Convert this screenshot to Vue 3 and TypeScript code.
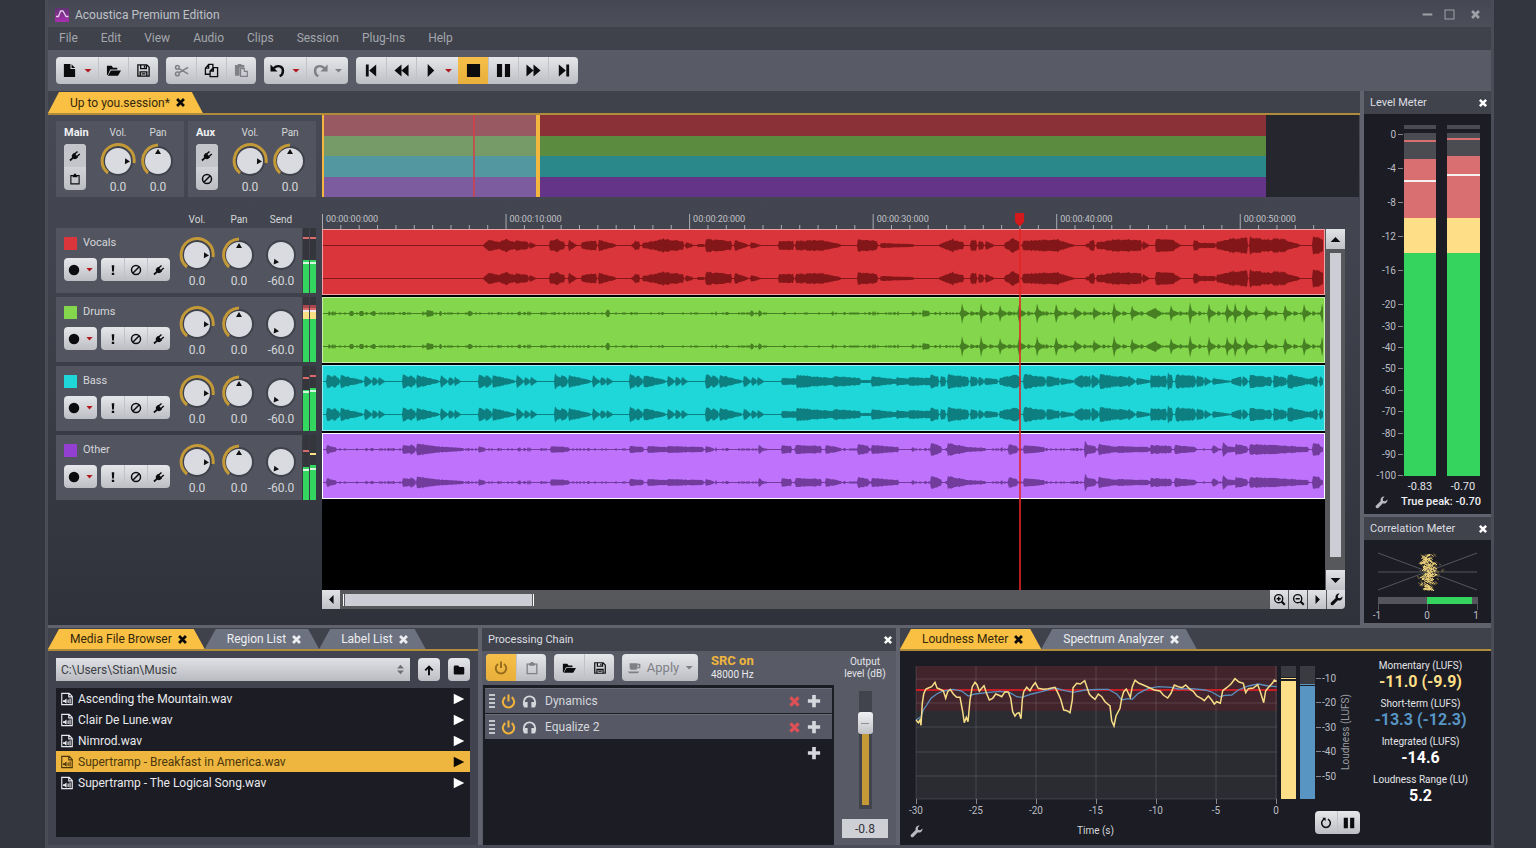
<script setup lang="ts">
import { computed, defineComponent, h, ref } from 'vue'

type Shape = { d: string; w?: number; t?: string }

const glyphs: Record<string, Shape[]> = {
  file: [{ d: 'M2 1h7v5.5h5V15H2zM10.2 1.2 14 5.2h-3.8z' }],
  open: [{ d: 'M1 3h5l1.5 2H12v2H4.5L2 12.5 1 13zM5.2 8H16l-3.2 5.5H2z' }],
  save: [{ d: 'M2 2h9.5L14 4.5V14H2zM5 2v4h6V2M9 3v2M4.5 14V9.5h7V14M6 11.5h4', w: 1.4 }],
  cut: [{ d: 'M5.2 6 15 11.5M5.2 10.4 15 4.6M3.6 6.6a2 2 0 1 0 0-4 2 2 0 0 0 0 4zM3.6 13.6a2 2 0 1 0 0-4 2 2 0 0 0 0 4z', w: 1.6 }],
  copy: [{ d: 'M6 12H1.5V5.5l3.5-4h4.5V5M1.5 5.5H5v-4M6.5 8.5 10 5h4.5v9.5h-8zM6.5 8.5H10V5', w: 1.4 }],
  paste: [{ d: 'M1 2h3V1h4v1h3v3H6v8.500H1z' }, { d: 'M7 6h4v3h3.200v5.300H7z', w: 1.3 }],
  undo: [{ d: 'M4 5.500C8 1.500 14 3.500 13.800 8.500c0 3-1.800 4.800-3.500 5.500', w: 2.6 }, { d: 'M.5 1.500v7.500H8z' }],
  redo: [{ d: 'M12 5.500C8 1.500 2 3.500 2.200 8.500c0 3 1.800 4.800 3.500 5.500', w: 2.6 }, { d: 'M15.500 1.500v7.500H8z' }],
  first: [{ d: 'M2 1.500h3v13H2zM13 1.500v13L5.500 8z' }],
  rewind: [{ d: 'M8 1.500v13L.5 8zM15.500 1.500v13L8 8z' }],
  play: [{ d: 'M5 1v14L12 8z' }],
  stop: [{ d: 'M1 1h14v14H1z' }],
  pause: [{ d: 'M1 1h5.500v14H1zM9.500 1H15v14H9.500z' }],
  forward: [{ d: 'M8 1.500v13L15.500 8zM.5 1.500v13L8 8z' }],
  last: [{ d: 'M11 1.500h3v13h-3zM3 1.500v13L10.500 8z' }],
  plug: [{ d: 'M4 6h8v2.500a4 4 0 0 1-2.800 3.800V17H6.800v-4.700A4 4 0 0 1 4 8.500zM4.800 1.500h1.900V6H4.800zM9.300 1.500h1.900V6H9.300z', t: 'rotate(48 8 8)' }],
  clip: [{ d: 'M2.500 3.500h11v11h-11z', w: 1.5 }, { d: 'M5 2.500h1.500V1h3v1.500H11v3H5z' }],
  ban: [{ d: 'M8 14a6 6 0 1 0 0-12 6 6 0 0 0 0 12zM4 12 12 4', w: 2 }],
  alert: [{ d: 'M6.300 1.500h3.400L9.200 10H6.800zM6.400 11.500h3.200v3H6.400z' }],
  dot: [{ d: 'M8 15A7 7 0 1 0 8 1a7 7 0 0 0 0 14z' }],
  wrench: [{ d: 'M15.300 4.200a4.300 4.300 0 0 1-5.600 4.800l-5.400 5.500a2 2 0 0 1-2.900-2.900L7 6.300A4.300 4.300 0 0 1 11.800.7L9.500 3.300l.5 2.700 2.700.5z' }],
  zoomin: [{ d: 'M7 12A5 5 0 1 0 7 2a5 5 0 0 0 0 10zM4.500 7h5M7 4.500v5', w: 1.7 }, { d: 'm10.500 10.500 4 4', w: 2.600 }],
  zoomout: [{ d: 'M7 12A5 5 0 1 0 7 2a5 5 0 0 0 0 10zM4.500 7h5', w: 1.7 }, { d: 'm10.500 10.500 4 4', w: 2.600 }],
  left: [{ d: 'M10.500 2.500v11L5 8z' }],
  right: [{ d: 'M5.500 2.500v11L11 8z' }],
  up: [{ d: 'M2 11h12L8 5z' }],
  down: [{ d: 'M2 5h12l-6 6z' }],
  arrowup: [{ d: 'M8 15V4M3 8.500l5-5 5 5', w: 2.600 }],
  folder: [{ d: 'M1 3.500 2 2h5l1.500 2H14l1 1v8l-1 1H2l-1-1z' }],
  sound: [{ d: 'M2 1.500h8.500l3.500 3.500v9.500H2zM10 1.500V5.500h4M9.300 8.500v4M11.500 7.500v5.500', w: 1.300 }, { d: 'M3.500 9.500H5l2.500-2v6L5 11.500H3.500z' }],
  power: [{ d: 'M4.600 3.400a6 6 0 1 0 6.800 0M8 .5v7.500', w: 2.200 }],
  phones: [{ d: 'M2 12V8.500a6 6 0 0 1 12 0V12', w: 2 }, { d: 'M2.500 8.500H6v6H3.500a2 2 0 0 1-2-2zM10 8.500h3.500l1 4a2 2 0 0 1-2 2H10z' }],
  cross: [{ d: 'M3 3l10 10M13 3 3 13', w: 4 }],
  plus: [{ d: 'M8 1v14M1 8h14', w: 4.200 }],
  cup: [{ d: 'M3 2.500h9V7a3 3 0 0 1-3 3H6a3 3 0 0 1-3-3zM1 12h13l-1.500 2H2.500z' }, { d: 'M12 4h2.500v3.500H12', w: 1.500 }],
  cycle: [{ d: 'M10.500 2.800a5.800 5.800 0 1 1-5 0', w: 2 }, { d: 'M3 1h4.500v4.500z' }],
  min: [{ d: 'M1 6.500h14v3H1z' }],
  max: [{ d: 'M1.500 1.500h13v13h-13z', w: 1.500 }],
  playbig: [{ d: 'M1 1v14l14-7z' }],
  sort: [{ d: 'M3 6.500h10L8 1zM3 9.500h10L8 15z' }],
}

const Icon = defineComponent({
  props: { name: { type: String, required: true } },
  setup(props) {
    return () =>
      h(
        'svg',
        { viewBox: '0 0 16 16', 'aria-hidden': 'true' },
        glyphs[props.name].map((s) =>
          h('path', {
            d: s.d,
            transform: s.t,
            fill: s.w ? 'none' : 'currentColor',
            stroke: s.w ? 'currentColor' : 'none',
            'stroke-width': s.w,
          }),
        ),
      )
  },
})

const KNOB_ARC: Record<string, string> = {
  vol: 'M9 32A16 16 0 1 1 35 22',
  pan: 'M9 32A16 16 0 0 1 19 4',
  send: '',
}
const Knob = defineComponent({
  props: { kind: { type: String, required: true } },
  setup(props) {
    return () => {
      const angle = props.kind === 'vol' ? 92 : props.kind === 'pan' ? 0 : 218
      return h('svg', { viewBox: '0 0 38 38', width: 38, height: 38, role: 'img', 'aria-label': props.kind }, [
        h('circle', { cx: 19, cy: 20, r: 15, fill: '#3f424b' }),
        h('path', { d: KNOB_ARC[props.kind], fill: 'none', stroke: '#c49a38', 'stroke-width': 3 }),
        h('circle', { cx: 19, cy: 20, r: 13, fill: '#d9dbe0' }),
        h('path', { d: 'M19 8l3 5h-6z', fill: '#111', transform: `rotate(${angle} 19 20)` }),
      ])
    }
  },
})

const menus = ['File', 'Edit', 'View', 'Audio', 'Clips', 'Session', 'Plug-Ins', 'Help']

type Tool = { icon: string; label: string; arrow?: boolean; dim?: boolean; on?: boolean }
const toolGroups: Tool[][] = [
  [{ icon: 'file', label: 'New', arrow: true }, { icon: 'open', label: 'Open' }, { icon: 'save', label: 'Save' }],
  [{ icon: 'cut', label: 'Cut', dim: true }, { icon: 'copy', label: 'Copy' }, { icon: 'paste', label: 'Paste', dim: true }],
  [{ icon: 'undo', label: 'Undo', arrow: true }, { icon: 'redo', label: 'Redo', arrow: true, dim: true }],
  [
    { icon: 'first', label: 'Go to start' },
    { icon: 'rewind', label: 'Rewind' },
    { icon: 'play', label: 'Play', arrow: true },
    { icon: 'stop', label: 'Stop', on: true },
    { icon: 'pause', label: 'Pause' },
    { icon: 'forward', label: 'Forward' },
    { icon: 'last', label: 'Go to end' },
  ],
]

type Band = [y: number, height: number, color: string]
type Burst = [from: number, to: number, a: number, b: number]
interface Track {
  name: string
  key: string
  meter: [Band[], Band[]]
  bursts: Burst[]
  floor: number
}

const green = '#33d65f'
const vocalMeter: Band[] = [[9, 2, '#d96a6c'], [32, 33, green], [34, 2, '#d8f5e0']]
const drumMeter: Band[] = [[8, 3, '#a8484c'], [11, 4, '#d96a6c'], [13, 2, '#f4e9e9'], [15, 7, '#fbdf84'], [22, 43, green]]

const bassPhrase: Burst[] = [[4, 10, 7, 4], [11, 16, 6, 3], [18, 39, 6, 1], [42, 48, 6, 1], [50, 54, 4, 2], [56, 62, 4, 0]]
const bassIntro: Burst[] = [0, 76, 152, 228, 303, 379].flatMap((o) =>
  bassPhrase.map(([a, b, x, y]): Burst => [a + o, b + o, x, y]),
)
const drumHits: [number, number][] = [
  [639, 10], [658, 10], [677, 9], [696, 10], [714, 9], [733, 10], [752, 6], [771, 6], [791, 10], [809, 7], [848, 8],
  [867, 11], [886, 9], [904, 9], [912, 10], [923, 8], [943, 7], [962, 8], [981, 10], [999, 9],
]

const tracks: Track[] = [
  {
    name: 'Vocals', key: 'vocals', meter: [vocalMeter, vocalMeter], floor: 0,
    bursts: [
      [161, 165, 1, 5], [165, 177, 5, 3], [178, 184, 4, 6], [184, 192, 5, 3], [193, 205, 5, 3], [207, 213, 3, 0],
      [227, 234, 4, 6], [234, 241, 6, 3], [246, 254, 5, 0], [259, 273, 3, 5], [276, 292, 5, 1], [308, 311, 0, 2], [312, 316, 4, 4],
      [320, 340, 2, 6], [340, 360, 6, 4], [363, 369, 3, 1], [375, 381, 1, 1], [383, 408, 6, 4], [412, 424, 5, 1], [428, 438, 3, 0],
      [456, 470, 4, 4], [473, 498, 4, 5], [498, 517, 5, 1], [535, 554, 6, 4], [558, 590, 2, 1], [617, 630, 1, 6], [630, 640, 5, 3],
      [648, 653, 5, 5], [656, 660, 4, 3], [663, 670, 4, 1], [682, 690, 2, 7], [690, 697, 7, 3], [700, 735, 4, 6], [735, 752, 5, 0],
      [763, 766, 1, 2], [767, 771, 5, 5], [774, 790, 3, 5], [790, 818, 6, 5], [820, 825, 4, 1], [833, 850, 6, 5], [850, 858, 5, 0],
      [871, 875, 5, 4], [876, 892, 2, 2], [894, 910, 3, 7], [910, 924, 6, 8], [927, 950, 8, 5], [950, 962, 7, 6], [962, 976, 5, 1],
      [990, 996, 8, 8], [996, 1001, 7, 4],
    ],
  },
  {
    name: 'Drums', key: 'drums', meter: [drumMeter, drumMeter], floor: 1,
    bursts: [
      [27, 30, 2, 2], [37, 40, 2, 2], [50, 52, 2, 2], [104, 110, 3, 2], [146, 148, 2, 2], [284, 286, 3, 3], [428, 430, 3, 2],
      [436, 438, 3, 2], [600, 606, 3, 2], [824, 832, 1, 5], [832, 838, 5, 1],
      ...drumHits.flatMap(([x, a]): Burst[] => [[x - 1, x, a / 3, a], [x, x + 2, a, 2], [x + 2, x + 6, 3, 1], [x + 9, x + 11, 2, 1]]),
    ],
  },
  {
    name: 'Bass', key: 'bass', floor: 0,
    meter: [
      [[11, 2, '#d96a6c'], [24, 41, green], [25, 2, '#d8f5e0']],
      [[9, 2, '#d96a6c'], [22, 43, green], [24, 2, '#d8f5e0']],
    ],
    bursts: [
      ...bassIntro,
      [459, 473, 3, 3], [474, 511, 6, 3], [511, 537, 5, 3], [537, 549, 1, 1], [549, 573, 5, 2], [574, 586, 4, 2], [586, 607, 4, 3],
      [608, 615, 6, 5], [618, 622, 5, 4], [625, 645, 7, 4], [648, 654, 5, 3], [656, 660, 5, 2], [662, 674, 3, 2], [677, 692, 3, 6],
      [693, 697, 6, 5], [701, 722, 7, 4], [724, 736, 5, 3], [738, 750, 3, 1], [752, 759, 3, 6], [759, 767, 5, 5], [769, 775, 6, 3],
      [777, 796, 7, 4], [796, 805, 5, 4], [806, 812, 5, 1], [814, 826, 3, 1], [828, 843, 6, 5], [845, 849, 8, 6], [853, 872, 7, 5],
      [874, 880, 5, 4], [882, 887, 4, 1], [890, 908, 3, 0], [909, 918, 2, 5], [920, 924, 6, 2], [927, 948, 6, 4], [951, 957, 6, 4],
      [958, 963, 5, 3], [965, 986, 7, 2], [986, 994, 2, 5], [997, 1001, 5, 1],
    ],
  },
  {
    name: 'Other', key: 'other', floor: 1,
    meter: [
      [[15, 2, '#d96a6c'], [32, 33, green], [34, 2, '#d8f5e0']],
      [[18, 2, '#fbdf84'], [30, 35, green], [33, 2, '#d8f5e0']],
    ],
    bursts: [
      [4, 13, 4, 1], [80, 88, 4, 3], [88, 92, 5, 2], [94, 112, 6, 3], [112, 140, 3, 1], [156, 162, 3, 1], [228, 245, 3, 2], [307, 320, 3, 2],
      [325, 345, 3, 2], [345, 380, 3, 2], [383, 390, 3, 1], [436, 440, 4, 1], [459, 468, 4, 3], [473, 498, 4, 3], [503, 518, 4, 1],
      [535, 545, 5, 3], [549, 575, 4, 2], [608, 618, 6, 3], [625, 645, 6, 2], [645, 660, 2, 1], [686, 694, 5, 3], [701, 720, 4, 2],
      [762, 765, 8, 4], [765, 772, 4, 3], [776, 795, 5, 2], [795, 825, 3, 2], [828, 848, 4, 3], [852, 872, 4, 2], [890, 894, 4, 2],
      [900, 903, 8, 4], [903, 912, 3, 2], [913, 924, 5, 3], [927, 950, 5, 4], [951, 985, 4, 2], [990, 996, 6, 5], [996, 1001, 4, 1],
    ],
  },
]

function wavePath(track: Track): string {
  const width = 1001
  let seed = 17 + track.name.length * 31
  const random = () => (seed = (seed * 16807) % 2147483647) / 2147483647
  const amp = new Array<number>(width).fill(0)
  if (track.floor) for (let x = 5; x < width; x++) if (random() > 0.62) amp[x] = Math.round(random() * 1.6)
  for (const [from, to, a, b] of track.bursts) {
    for (let x = from; x <= to && x < width; x++) {
      const level = a + ((b - a) * (x - from)) / Math.max(1, to - from)
      amp[x] = Math.max(amp[x], level * (0.8 + random() * 0.3))
    }
  }
  const outline = (cy: number) => {
    const top = amp.map((a, x) => `${x} ${(cy - 0.5 - a).toFixed(1)}`)
    const bottom = amp.map((a, x) => `${x} ${(cy + 0.5 + a).toFixed(1)}`).reverse()
    return `M${top.join('L')}L${bottom.join('L')}Z`
  }
  return outline(15.5) + outline(48.5)
}
const waves = tracks.map(wavePath)

const majors = [0, 1, 2, 3, 4, 5].map((i) => ({ x: `${i * 18.3}%`, text: `00:00:${i}0:000` }))
const minors = Array.from({ length: 54 }, (_, i) => i + 1).filter((i) => i % 10).map((i) => `${(i * 1.83).toFixed(2)}%`)

const levelScale: [number, string][] = [
  [20, '0'], [54, '-4'], [88, '-8'], [122, '-12'], [156, '-16'], [190, '-20'], [212, '-30'], [233, '-40'], [254, '-50'],
  [276, '-60'], [297, '-70'], [319, '-80'], [340, '-90'], [361, '-100'],
]

const scatter = computed(() => {
  let seed = 91
  const random = () => (seed = (seed * 16807) % 2147483647) / 2147483647
  const draw = (n: number, spread: number) => {
    const pts: string[] = []
    for (let i = 0; i < n; i++) {
      const y = 14 + random() * 35
      const half = (3 + 4 * Math.sin(((y - 12) / 40) * Math.PI) + 2 * Math.sin(y * 0.9)) * spread
      const drift = 2 * Math.sin(y * 0.25)
      pts.push(`${(65 + drift + (random() - 0.5) * 2 * half).toFixed(1)} ${y.toFixed(1)}`)
    }
    return pts
  }
  return {
    haze: draw(110, 1.5).map((p) => `M${p}l2 1`).join(''),
    core: draw(200, 0.95).map((p, i) => `M${p}l${i % 2 ? 2 : -2} ${i % 3 ? 2 : 1}`).join(''),
  }
})

// Loudness history, three units per chart pixel.
const momentary = '63,300 70,308 75,300 78,316 82,250 86,222 92,208 100,204 110,200 120,187 126,204 135,208 145,212 152,235 158,215 166,208 175,222 185,232 195,232 203,275 208,308 214,292 219,305 225,240 232,200 240,187 246,194 253,214 260,205 267,197 274,218 283,240 293,235 302,222 312,226 320,230 330,215 340,216 347,235 353,275 360,288 366,280 372,278 378,296 382,240 386,215 395,202 405,212 413,198 421,188 430,205 445,208 460,206 480,202 487,215 497,238 506,270 516,272 525,278 532,240 534,203 545,190 556,192 569,182 577,205 583,222 590,230 600,238 610,222 620,230 630,245 645,258 650,302 657,318 663,288 675,265 680,235 686,215 694,207 706,232 712,200 720,181 732,190 745,195 760,202 778,210 795,213 805,225 818,234 828,220 838,195 850,200 862,203 872,195 885,208 895,214 905,228 920,236 928,242 940,228 950,240 958,252 965,245 976,250 983,212 995,203 1008,192 1020,176 1032,186 1045,190 1052,218 1060,206 1075,204 1088,194 1096,215 1106,248 1112,212 1122,200 1132,190 1138,180 1145,184'
const shortTerm = '63,300 78,290 85,270 95,255 108,235 125,222 145,213 175,208 200,213 220,228 240,222 275,218 315,214 345,218 365,230 380,232 410,222 440,215 480,204 510,212 535,217 570,210 610,208 640,208 665,222 680,240 700,236 712,238 730,220 760,205 790,200 830,202 850,207 890,206 930,210 950,216 975,230 990,226 1010,225 1030,210 1060,198 1090,192 1120,198 1145,200'
const toChart = (points: string) =>
  points.split(' ').map((p) => {
    const [x, y] = p.split(',').map(Number)
    return `${(x / 3 - 5).toFixed(1)},${(y / 3 - 31).toFixed(1)}`
  }).join(' ')
const momentaryLine = toChart(momentary)
const shortTermLine = toChart(shortTerm)
const timeTicks = [-30, -25, -20, -15, -10, -5, 0].map((v, i) => ({ v, x: 16 + i * 60 }))
const lufsTicks = [-10, -20, -30, -40, -50].map((v, i) => ({ v, y: 28 + Math.round(i * 24.4) }))

const files = ['Ascending the Mountain.wav', 'Clair De Lune.wav', 'Nimrod.wav', 'Supertramp - Breakfast in America.wav', 'Supertramp - The Logical Song.wav']
const selected = ref(3)
const effects = ['Dynamics', 'Equalize 2']
const stats = [
  { label: 'Momentary (LUFS)', value: '-11.0 (-9.9)', tone: 'yellow' },
  { label: 'Short-term (LUFS)', value: '-13.3 (-12.3)', tone: 'blue' },
  { label: 'Integrated (LUFS)', value: '-14.6', tone: 'white' },
  { label: 'Loudness Range (LU)', value: '5.2', tone: 'white' },
]
const level = ref(78)
const levelText = ref('-0.8')
</script>

<template>
  <div class="desktop">
    <div class="window">
      <header class="titlebar">
        <svg class="logo" viewBox="0 0 14 14" aria-hidden="true">
          <defs>
            <linearGradient id="logo-fill" x1="0" y1="0" x2="0" y2="1">
              <stop offset="0" stop-color="#5f3272" />
              <stop offset="1" stop-color="#a82fae" />
            </linearGradient>
          </defs>
          <rect width="14" height="14" fill="url(#logo-fill)" />
          <path d="M1 8.500h2.500L5.500 3h2.500l3 5.500h2.500" fill="none" stroke="#e7cdec" stroke-width="1.300" stroke-linejoin="round" />
        </svg>
        <h1>Acoustica Premium Edition</h1>
        <div class="window-buttons">
          <button aria-label="Minimize"><Icon name="min" /></button>
          <button aria-label="Maximize"><Icon name="max" /></button>
          <button aria-label="Close"><Icon name="cross" /></button>
        </div>
      </header>

      <nav class="menubar">
        <button v-for="m in menus" :key="m">{{ m }}</button>
      </nav>

      <div class="toolbar">
        <div v-for="(g, i) in toolGroups" :key="i" class="group">
          <button v-for="t in g" :key="t.label" :aria-label="t.label" :class="{ wide: t.arrow, dim: t.dim, on: t.on }">
            <Icon :name="t.icon" />
            <i v-if="t.arrow" class="caret"></i>
          </button>
        </div>
      </div>

      <div class="workspace">
        <main class="session">
          <div class="tabs">
            <div class="tab active">
              <button>Up to you.session*</button>
              <button class="x" aria-label="Close session"><Icon name="cross" /></button>
            </div>
          </div>
          <div class="session-body">
            <div class="mixer">
              <div class="strips">
                <section v-for="s in ['Main', 'Aux']" :key="s" class="strip">
                  <div class="strip-side">
                    <h2>{{ s }}</h2>
                    <div class="group vertical">
                      <button class="shade" :aria-label="s + ' plug-ins'"><Icon name="plug" /></button>
                      <button :aria-label="s + ' option'"><Icon :name="s === 'Main' ? 'clip' : 'ban'" /></button>
                    </div>
                  </div>
                  <div class="knob"><span class="cap">Vol.</span><Knob kind="vol" /><span>0.0</span></div>
                  <div class="knob"><span class="cap">Pan</span><Knob kind="pan" /><span>0.0</span></div>
                </section>
              </div>
              <div class="knob-labels"><span>Vol.</span><span>Pan</span><span>Send</span></div>
              <div class="heads">
                <section v-for="t in tracks" :key="t.key" class="head">
                  <div class="head-info">
                    <div class="track-name"><i :class="['swatch', t.key]"></i>{{ t.name }}</div>
                    <div class="track-buttons">
                      <div class="group small">
                        <button class="rec" :aria-label="'Record ' + t.name"><Icon name="dot" /><i class="caret"></i></button>
                      </div>
                      <div class="group small">
                        <button :aria-label="'Solo ' + t.name"><Icon name="alert" /></button>
                        <button :aria-label="'Mute ' + t.name"><Icon name="ban" /></button>
                        <button :aria-label="'Plug-ins for ' + t.name"><Icon name="plug" /></button>
                      </div>
                    </div>
                  </div>
                  <div class="knob"><Knob kind="vol" /><span>0.0</span></div>
                  <div class="knob"><Knob kind="pan" /><span>0.0</span></div>
                  <div class="knob"><Knob kind="send" /><span>-60.0</span></div>
                  <svg class="track-meter" viewBox="0 0 13 65" aria-hidden="true">
                    <g v-for="(bands, i) in t.meter" :key="i">
                      <rect :x="i * 7" y="0" width="6" height="65" fill="#35363b" />
                      <rect v-for="(b, j) in bands" :key="j" :x="i * 7" :y="b[0]" width="6" :height="b[1]" :fill="b[2]" />
                    </g>
                  </svg>
                </section>
              </div>
            </div>

            <div class="timeline">
              <div class="overview">
                <div class="stripes"><i class="s1"></i><i class="s2"></i><i class="s3"></i><i class="s4"></i></div>
                <div class="view-range"></div>
                <div class="view-cursor"></div>
              </div>
              <div class="tracks">
                <svg class="ruler" width="100%" height="32" aria-label="Timeline">
                  <g v-for="m in majors" :key="m.text">
                    <svg :x="m.x" y="0" overflow="visible">
                      <path d="M0 17h1v15H0z" fill="#a9abb1" />
                      <text x="4" y="25">{{ m.text }}</text>
                    </svg>
                  </g>
                  <svg v-for="x in minors" :key="x" :x="x" y="0" overflow="visible"><path d="M0 28h1v4H0z" fill="#a9abb1" /></svg>
                  <svg x="69.500%" y="0" overflow="visible"><path d="M-4 16h9v9l-4 4h-1l-4-4z" fill="#d4191c" /></svg>
                </svg>
                <div></div>
                <div class="lanes">
                  <div v-for="(t, i) in tracks" :key="t.key" :class="['lane', t.key]">
                    <svg viewBox="0 0 1001 64" preserveAspectRatio="none" role="img" :aria-label="t.name + ' waveform'"><path :d="waves[i]" /></svg>
                  </div>
                  <div class="playhead"></div>
                </div>
                <div class="vscroll">
                  <button aria-label="Scroll up"><Icon name="up" /></button>
                  <div class="vthumb"></div>
                  <button aria-label="Scroll down"><Icon name="down" /></button>
                </div>
                <div class="hscroll">
                  <button aria-label="Scroll left"><Icon name="left" /></button>
                  <div class="hrail"><div class="hthumb"></div></div>
                  <button aria-label="Zoom in"><Icon name="zoomin" /></button>
                  <button aria-label="Zoom out"><Icon name="zoomout" /></button>
                  <button aria-label="Scroll right"><Icon name="right" /></button>
                  <button aria-label="Timeline settings"><Icon name="wrench" /></button>
                </div>
              </div>
            </div>
          </div>
        </main>

        <aside class="meters">
          <section class="level">
            <header class="panel-head"><h2>Level Meter</h2><button class="x" aria-label="Close level meter"><Icon name="cross" /></button></header>
            <svg viewBox="0 0 127 380" role="img" aria-label="Level meter">
              <g v-for="[y, t] in levelScale" :key="t">
                <text x="32" :y="y + 4" text-anchor="end">{{ t }}</text>
                <path :d="`M34 ${y}h5v1h-5z`" fill="#85868c" />
              </g>
              <path d="M40 11h32v4H40zM40 19h32v26H40zM83 11h33v4H83zM83 19h33v23H83z" fill="#4b4c51" />
              <path d="M40 45h32v59H40zM83 42h33v62H83zM40 26h32v2H40zM83 24h33v2H83z" fill="#d96f70" />
              <path d="M40 104h32v35H40zM83 104h33v35H83z" fill="#fedf87" />
              <path d="M40 139h32v223H40zM83 139h33v223H83z" fill="#34d45f" />
              <path d="M40 66h32v2H40zM83 60h33v2H83z" fill="#f6f0f0" />
              <g class="peak">
                <text x="56" y="376" text-anchor="middle">-0.83</text>
                <text x="99" y="376" text-anchor="middle">-0.70</text>
              </g>
            </svg>
            <footer><button class="bare" aria-label="Level meter settings"><Icon name="wrench" /></button><span>True peak: -0.70</span></footer>
          </section>
          <section class="correlation">
            <header class="panel-head"><h2>Correlation Meter</h2><button class="x" aria-label="Close correlation meter"><Icon name="cross" /></button></header>
            <svg viewBox="0 0 127 83" role="img" aria-label="Correlation meter">
              <path d="M14 13l99 37M14 50l99-37M14 32h99" stroke="#55565d" fill="none" />
              <path :d="scatter.haze" stroke="#6f633f" fill="none" />
              <path :d="scatter.core" stroke="#f3d77e" fill="none" />
              <path d="M14 57h100v7H15v6h-1zM113 64h1v6h-1zM63 64h1v6h-1z" fill="#55565d" />
              <path d="M63 57h45v7H63z" fill="#34d45f" />
              <g text-anchor="middle">
                <text x="13" y="79">-1</text>
                <text x="63" y="79">0</text>
                <text x="112" y="79">1</text>
              </g>
            </svg>
          </section>
        </aside>
      </div>

      <div class="dock">
        <section class="media">
          <div class="tabs">
            <div class="tab active"><button>Media File Browser</button><button class="x" aria-label="Close media file browser"><Icon name="cross" /></button></div>
            <div class="tab"><button>Region List</button><button class="x" aria-label="Close region list"><Icon name="cross" /></button></div>
            <div class="tab"><button>Label List</button><button class="x" aria-label="Close label list"><Icon name="cross" /></button></div>
          </div>
          <div class="media-body">
            <div class="path-row">
              <div class="select">
                <select aria-label="Folder"><option>C:\Users\Stian\Music</option></select>
                <Icon name="sort" />
              </div>
              <button class="key" aria-label="Up one folder"><Icon name="arrowup" /></button>
              <button class="key" aria-label="Browse"><Icon name="folder" /></button>
            </div>
            <ul class="files">
              <li v-for="(f, i) in files" :key="f" :class="{ selected: i === selected }" @click="selected = i">
                <Icon name="sound" /><span>{{ f }}</span>
                <button :aria-label="'Play ' + f"><Icon name="playbig" /></button>
              </li>
            </ul>
          </div>
        </section>

        <section class="chain">
          <header class="panel-head"><h2>Processing Chain</h2><button class="x" aria-label="Close processing chain"><Icon name="cross" /></button></header>
          <div class="chain-body">
            <div class="chain-main">
              <div class="chain-tools">
                <div class="group">
                  <button class="on amber" aria-label="Enable chain"><Icon name="power" /></button>
                  <button class="dim" aria-label="Paste chain"><Icon name="clip" /></button>
                </div>
                <div class="group">
                  <button aria-label="Open chain"><Icon name="open" /></button>
                  <button aria-label="Save chain"><Icon name="save" /></button>
                </div>
                <div class="group"><button class="apply dim"><Icon name="cup" />Apply<i class="caret"></i></button></div>
                <div class="src"><b>SRC on</b><span>48000 Hz</span></div>
              </div>
              <div class="effects">
                <div v-for="e in effects" :key="e" class="effect">
                  <i class="grip"></i>
                  <button class="pow" :aria-label="'Enable ' + e"><Icon name="power" /></button>
                  <button class="phones" :aria-label="'Monitor ' + e"><Icon name="phones" /></button>
                  <span>{{ e }}</span>
                  <button class="del" :aria-label="'Remove ' + e"><Icon name="cross" /></button>
                  <button :aria-label="'Add after ' + e"><Icon name="plus" /></button>
                </div>
                <div class="effect empty"><span></span><button aria-label="Add effect"><Icon name="plus" /></button></div>
              </div>
            </div>
            <div class="output">
              <label for="out-level">Output<br />level (dB)</label>
              <input id="out-level" v-model="level" type="range" min="0" max="100" />
              <input v-model="levelText" class="out-value" type="text" aria-label="Output level value" />
            </div>
          </div>
        </section>

        <section class="loudness">
          <div class="tabs">
            <div class="tab active"><button>Loudness Meter</button><button class="x" aria-label="Close loudness meter"><Icon name="cross" /></button></div>
            <div class="tab"><button>Spectrum Analyzer</button><button class="x" aria-label="Close spectrum analyzer"><Icon name="cross" /></button></div>
          </div>
          <div class="loud-body">
            <div class="plot">
              <svg viewBox="0 0 380 166" role="img" aria-label="Loudness history">
                <path d="M16 15h361v45H16z" fill="#42252c" />
                <path d="M16 60h361v88H16z" fill="#2b2c32" />
                <path d="M16 28h361M16 52h361M16 76h361M16 101h361M16 125h361M76 15v133M136 15v133M196 15v133M256 15v133M316 15v133M376 15v133M16 15v133M16 148h361" stroke="#fff" stroke-opacity=".13" fill="none" />
                <path d="M16 38h361v2H16z" fill="#c81d27" />
                <polyline :points="shortTermLine" fill="none" stroke="#5b8fbf" stroke-width="1.300" />
                <polyline :points="momentaryLine" fill="none" stroke="#f6dc86" stroke-width="1.500" />
                <g v-for="t in timeTicks" :key="t.v">
                  <path :d="`M${t.x} 148h1v5h-1z`" fill="#85868c" />
                  <text :x="t.x" y="163" text-anchor="middle">{{ t.v }}</text>
                </g>
              </svg>
              <footer><button class="bare" aria-label="Loudness settings"><Icon name="wrench" /></button><span>Time (s)</span></footer>
            </div>
            <div class="bars">
              <svg viewBox="0 0 80 154" role="img" aria-label="Current loudness">
                <path d="M1 15h15v11H1zM20 15h15v18H20z" fill="#3a3b41" />
                <path d="M1 27h15v1H1zM1 30h15v118H1z" fill="#fedf87" />
                <path d="M20 33h15v1H20zM20 35h15v113H20z" fill="#5895c3" />
                <g v-for="t in lufsTicks" :key="t.v">
                  <path :d="`M36 ${t.y - 1}h5v1h-5z`" fill="#85868c" />
                  <text x="42" :y="t.y + 3">{{ t.v }}</text>
                </g>
                <text class="axis" transform="translate(69 81) rotate(-90)" text-anchor="middle">Loudness (LUFS)</text>
              </svg>
              <div class="group small pair">
                <button aria-label="Reset"><Icon name="cycle" /></button>
                <button aria-label="Pause metering"><Icon name="pause" /></button>
              </div>
            </div>
            <dl class="stats">
              <div v-for="s in stats" :key="s.label"><dt>{{ s.label }}</dt><dd :class="s.tone">{{ s.value }}</dd></div>
            </dl>
          </div>
        </section>
      </div>
    </div>
  </div>
</template>

<style>
body {
  margin: 0;
  background: #34363f;
}
</style>

<style scoped>
.desktop {
  min-height: 100vh;
  padding: 0 42px 0 45px;
  display: flex;
  box-sizing: border-box;
  font-family: Roboto, "Liberation Sans", sans-serif;
  font-size: 12px;
  line-height: 16px;
  color: #d5d7db;
}
.desktop *,
.desktop *::before {
  box-sizing: border-box;
}
h1,
h2,
dl,
dd,
ul {
  margin: 0;
  padding: 0;
  font-weight: 400;
}
h2 {
  font-size: 11px;
}
svg {
  display: block;
}
button {
  font: inherit;
  color: inherit;
  background: none;
  border: 0;
  padding: 0;
  margin: 0;
}
.window {
  flex: 1;
  min-width: 0;
  display: flex;
  flex-direction: column;
  border: 3px solid #4a4d58;
  border-top-width: 0;
  background: #60636e;
}
.titlebar {
  height: 27px;
  display: flex;
  align-items: center;
  gap: 6px;
  padding: 2px 10px 0 7px;
  background: linear-gradient(#454853, #4c4f5a);
}
.titlebar h1 {
  flex: 1;
  font-size: 12px;
  color: #bfc1c7;
}
.logo {
  width: 14px;
  height: 14px;
}
.window-buttons {
  display: flex;
  align-items: center;
  gap: 11px;
  color: #9da0a7;
}
.window-buttons svg {
  width: 11px;
  height: 11px;
}
.window-buttons button:last-child {
  margin-left: 4px;
}
.menubar {
  height: 23px;
  display: flex;
  align-items: center;
  gap: 23px;
  padding: 0 0 2px 11px;
  background: #3f424a;
  color: #a3a6ad;
}
.toolbar {
  height: 41px;
  display: flex;
  align-items: center;
  gap: 8px;
  padding-left: 8px;
  background: #585b66;
}
.group {
  display: flex;
  height: 27px;
  border-radius: 4px;
  overflow: hidden;
  background: linear-gradient(#e6e7ea, #bcbec4);
  color: #0c0c0e;
}
.group button {
  width: 30px;
  display: flex;
  align-items: center;
  justify-content: center;
  gap: 7px;
}
.group button + button {
  border-left: 1px solid #c0c2c7;
}
.group button.wide {
  width: 42px;
}
.group svg {
  width: 14px;
  height: 14px;
}
.toolbar .group svg {
  width: 15px;
  height: 15px;
}
.caret {
  width: 8px;
  height: 4px;
  background: #b3161c;
  clip-path: polygon(0 0, 100% 0, 50% 100%);
}
.dim {
  color: #7e8086;
}
.dim .caret {
  background: #7e8086;
}
.group button.on {
  background: linear-gradient(#f5bf49, #e8b03b);
  border-color: transparent;
}
.group .amber {
  color: #946c1c;
}
.group.vertical {
  flex-direction: column;
  width: 22px;
  height: 46px;
  margin-top: 3px;
}
.group.vertical button {
  width: 22px;
  height: 23px;
}
.group.vertical button + button {
  border-left: 0;
}
.group.vertical .shade {
  background: #c3c5ca;
}
.group.vertical svg {
  width: 12px;
  height: 12px;
}
.group.small {
  height: 23px;
}
.group.small button {
  width: 23px;
  gap: 6px;
}
.group.small .rec {
  width: 33px;
}
.group.small svg {
  width: 12px;
  height: 12px;
}
.rec .caret {
  width: 7px;
}

.workspace {
  flex: 1 0 auto;
  display: grid;
  grid-template-columns: minmax(0, 1fr) 127px;
  gap: 4px;
}
.session {
  display: flex;
  flex-direction: column;
}
.tabs {
  display: flex;
  height: 23px;
  padding-top: 1px;
  background: #3f424b;
  border-bottom: 2px solid #b08c3a;
}
.session > .tabs {
  height: 24px;
}
.tab {
  display: flex;
  align-items: center;
  gap: 5px;
  padding: 0 17px 0 22px;
  background: #6d7280;
  color: #eceef1;
  clip-path: polygon(11px 0, calc(100% - 11px) 0, 100% 100%, 0 100%);
}
.tab.active {
  background: #fac044;
  color: #33270a;
}
.x svg {
  width: 11px;
  height: 11px;
}
.tab.active .x {
  color: #0b0a06;
}
.session-body {
  flex: 1;
  display: grid;
  grid-template-columns: 274px minmax(0, 1fr);
  background: linear-gradient(#474a54, #2f323b);
}
.mixer {
  padding: 6px 0 0 8px;
}
.strips {
  display: flex;
  gap: 4px;
}
.strip {
  width: 128px;
  height: 76px;
  padding: 4px 0 0 8px;
  display: flex;
  background: #525560;
}
.strip-side {
  width: 34px;
}
.strip h2 {
  line-height: 16px;
  font-weight: 700;
  color: #f0f1f3;
}
.knob {
  width: 42px;
  display: flex;
  flex-direction: column;
  align-items: center;
}
.strip .knob {
  width: 40px;
}
.cap,
.knob-labels {
  font-size: 10px;
}
.knob-labels {
  height: 31px;
  padding: 15px 0 0 120px;
  display: flex;
}
.knob-labels span {
  width: 42px;
  text-align: center;
}
.heads {
  display: flex;
  flex-direction: column;
  gap: 4px;
}
.head {
  width: 261px;
  height: 65px;
  display: flex;
  background: linear-gradient(90deg, #525560 246px, transparent 246px);
}
.head-info {
  width: 120px;
  padding: 7px 0 0 8px;
}
.head .knob {
  padding-top: 7px;
}
.head .knob:nth-child(4) {
  margin-right: 1px;
}
.track-name {
  display: flex;
  align-items: center;
  gap: 6px;
  font-size: 11px;
}
.swatch {
  width: 13px;
  height: 13px;
}
.track-buttons {
  display: flex;
  gap: 4px;
  margin-top: 7px;
}
.track-meter {
  width: 13px;
  height: 65px;
}
.swatch.vocals,
.lane.vocals {
  background: #d9353a;
}
.swatch.drums,
.lane.drums {
  background: #84d64c;
}
.swatch.bass,
.lane.bass {
  background: #1fd6d8;
}
.swatch.other {
  background: #9340d2;
}
.lane.other {
  background: #bf73fd;
  border-color: #fff;
}

.timeline {
  display: flex;
  flex-direction: column;
}
.overview {
  position: relative;
  height: 82px;
  margin-right: 1px;
  background: #25262e;
}
.stripes {
  width: 91%;
  height: 100%;
  display: grid;
  grid-template-rows: repeat(4, 1fr);
}
.s1 { background: #8a3137; }
.s2 { background: #5a8b3e; }
.s3 { background: #2a888b; }
.s4 { background: #643489; }
.view-range {
  position: absolute;
  inset: 0 auto 0 0;
  width: 21%;
  border-left: 2px solid #f3b63f;
  border-right: 4px solid #f3b63f;
  background: rgba(190, 195, 215, 0.28);
}
.view-cursor {
  position: absolute;
  top: 0;
  bottom: 0;
  left: 15%;
  width: 2px;
  margin-left: -5px;
  background: rgba(214, 62, 70, 0.75);
}
.tracks {
  flex: 1;
  display: grid;
  grid-template-columns: minmax(0, 1fr) 20px;
  grid-template-rows: 32px 1fr 19px;
  padding: 0 15px 16px 0;
}
.ruler {
  overflow: visible;
}
.ruler text {
  font-size: 9px;
  fill: #c0c2c7;
}
.lanes {
  position: relative;
  min-height: 361px;
  background: #000;
  display: flex;
  flex-direction: column;
  gap: 2px;
}
.lane {
  height: 66px;
  border: 1px solid rgba(255, 255, 255, 0.55);
}
.lane svg {
  width: 100%;
  height: 64px;
}
.lane.vocals path { fill: #821619; }
.lane.drums path { fill: #468022; }
.lane.bass path { fill: #0d7f80; }
.lane.other path { fill: #713c9c; }
.playhead {
  position: absolute;
  top: 0;
  bottom: 0;
  left: 70%;
  width: 2px;
  margin-left: -5px;
  background: rgba(226, 38, 38, 0.8);
}
.vscroll {
  display: flex;
  flex-direction: column;
  align-items: center;
  padding-left: 1px;
  background: #57585c;
}
.vscroll button,
.hscroll button {
  width: 18px;
  height: 19px;
  flex: none;
  display: flex;
  align-items: center;
  justify-content: center;
  background: linear-gradient(#e2e3e6, #bfc1c6);
  color: #0c0c0e;
}
.vscroll button {
  width: 19px;
  height: 20px;
}
.vscroll svg,
.hscroll svg {
  width: 13px;
  height: 13px;
}
.vthumb {
  flex: 1;
  width: 11px;
  margin: 4px 0 13px;
  background: #cdced5;
}
.hscroll {
  grid-column: 1 / 3;
  display: flex;
  gap: 1px;
  background: #57585c;
  border-radius: 0 0 4px 0;
  overflow: hidden;
}
.hrail {
  flex: 1;
  padding: 4px 0 3px 2px;
}
.hthumb {
  width: 191px;
  height: 12px;
  border-left: 1px solid #fff;
  border-right: 1px solid #fff;
  background: linear-gradient(90deg, #57585c 1px, #cdced5 1px calc(100% - 1px), #57585c calc(100% - 1px));
}

.meters {
  display: flex;
  flex-direction: column;
  gap: 3px;
  padding-bottom: 2px;
}
.meters section {
  background: #1b1c24;
}
.level {
  flex: 1;
}
.panel-head {
  height: 23px;
  display: flex;
  align-items: center;
  justify-content: space-between;
  padding: 0 3px 0 6px;
  background: #40434c;
  color: #dcdee2;
}
.panel-head .x {
  color: #fff;
}
.panel-head .x svg {
  width: 10px;
  height: 10px;
}
.meters text {
  font-size: 10px;
  fill: #bcbec4;
}
.meters .peak text {
  font-size: 11px;
  fill: #e3e4e8;
}
.level footer {
  display: flex;
  align-items: center;
  justify-content: space-between;
  padding: 0 10px 2px 11px;
  font-size: 11px;
  font-weight: 500;
  color: #eff0f2;
}
.bare svg {
  width: 13px;
  height: 13px;
  color: #b9bbc0;
}

.dock {
  flex: none;
  display: grid;
  grid-template-columns: 430fr 414fr 591fr;
  gap: 4px;
  margin-top: 3px;
}
.dock > section {
  min-width: 0;
  display: flex;
  flex-direction: column;
  background: #41444e;
}
.dock > .chain {
  background: #585b66;
}
.media-body {
  flex: 1;
  display: flex;
  flex-direction: column;
  gap: 7px;
  padding: 7px 8px 8px;
}
.path-row {
  display: flex;
  gap: 8px;
}
.select {
  position: relative;
  flex: 1;
}
.select select {
  width: 100%;
  height: 23px;
  appearance: none;
  border: 0;
  border-radius: 0;
  padding: 0 5px;
  background: linear-gradient(#e0e1e5, #b9bbc1);
  font: inherit;
  color: #3c3e44;
}
.select svg {
  position: absolute;
  right: 4px;
  top: 6px;
  width: 11px;
  height: 11px;
  color: #6d6f75;
}
.key {
  width: 22px;
  height: 23px;
  border-radius: 4px;
  display: flex;
  align-items: center;
  justify-content: center;
  background: linear-gradient(#e6e7ea, #bcbec4);
  color: #0c0c0e;
}
.key svg {
  width: 12px;
  height: 12px;
}
.files {
  flex: 1;
  list-style: none;
  background: #1b1c24;
  color: #e9eaed;
}
.files li {
  height: 21px;
  display: flex;
  align-items: center;
  gap: 4px;
  padding: 0 5px 0 4px;
}
.files li > svg {
  width: 14px;
  height: 14px;
}
.files span {
  flex: 1;
}
.files button svg {
  width: 12px;
  height: 12px;
}
.files button {
  color: #fff;
}
.files .selected {
  background: #efb63f;
  color: #4b360c;
}
.files .selected button {
  color: #0c0a04;
}

.chain-body {
  flex: 1;
  display: flex;
}
.chain-main {
  flex: 1;
  min-width: 0;
  display: flex;
  flex-direction: column;
  padding: 3px 0 0 1px;
}
.chain-tools {
  height: 31px;
  display: flex;
  gap: 8px;
  padding-left: 3px;
}
.chain-tools .apply {
  width: 76px;
  font-size: 13px;
  gap: 6px;
}
.src {
  display: flex;
  flex-direction: column;
  margin-left: 5px;
  line-height: 14px;
  font-size: 10px;
  color: #e9eaed;
}
.src b {
  font-size: 13px;
  font-weight: 700;
  color: #f0b53e;
}
.effects {
  flex: 1;
  display: flex;
  flex-direction: column;
  gap: 1px;
  padding: 3px 2px;
  background: #1b1c24;
}
.effect {
  height: 25px;
  display: flex;
  align-items: center;
  gap: 6px;
  padding: 0 11px 0 4px;
  background: #565965;
  border-top: 1px solid #6a6d78;
  color: #d5d7dc;
}
.effect.empty {
  background: none;
  border-color: transparent;
}
.effect span {
  flex: 1;
}
.effect svg {
  width: 14px;
  height: 14px;
}
.effect .pow {
  color: #efb23a;
}
.effect .pow svg,
.effect .phones svg {
  width: 15px;
  height: 15px;
}
.effect .phones {
  margin-right: 2px;
}
.effect .del {
  color: #dd5055;
}
.effect .del svg {
  width: 13px;
  height: 13px;
}
.effect .grip {
  width: 6px;
  height: 14px;
  background: repeating-linear-gradient(#c5c7cc 0 2px, transparent 2px 4px);
}
.output {
  width: 62px;
  display: flex;
  flex-direction: column;
  align-items: center;
  padding: 5px 0 7px;
}
.output label {
  line-height: 12px;
  font-size: 10px;
  text-align: center;
  color: #e3e4e8;
}
.output input[type="range"] {
  appearance: none;
  writing-mode: vertical-lr;
  direction: rtl;
  width: 15px;
  flex: 1;
  min-height: 117px;
  margin: 11px 0 10px;
  background: linear-gradient(#c49a38, #c49a38) 4px 40px / 7px 74px no-repeat, linear-gradient(#41444d, #41444d) 1px 0 / 13px 100% no-repeat;
}
.output input[type="range"]::-webkit-slider-thumb {
  appearance: none;
  width: 15px;
  height: 22px;
  border-radius: 3px;
  background: linear-gradient(#8d8f95, #8d8f95) center / 8px 1px no-repeat, linear-gradient(#f0f1f3, #c0c2c7);
}
.out-value {
  width: 46px;
  height: 19px;
  border: 0;
  padding: 0;
  text-align: center;
  font: inherit;
  background: #cfd0d5;
  color: #2f3136;
}

.loud-body {
  flex: 1;
  display: grid;
  grid-template-columns: 380fr 80fr 131fr;
  background: #1b1c24;
}
.loud-body text {
  font-size: 10px;
  fill: #bcbec4;
}
.loud-body .axis {
  font-size: 10px;
  fill: #9a9ca2;
}
.plot footer {
  display: flex;
  align-items: center;
  padding: 6px 0 6px 10px;
  font-size: 10px;
}
.plot footer span {
  flex: 1;
  padding-right: 12px;
  text-align: center;
}
.bars .pair {
  width: 45px;
  margin: 6px 0 0 35px;
}
.stats {
  padding: 7px 10px 0 0;
  text-align: center;
}
.stats > div {
  height: 38px;
}
.stats dt {
  font-size: 10px;
  line-height: 16px;
  color: #e3e4e8;
}
.stats dd {
  font-size: 16px;
  line-height: 16px;
  font-weight: 700;
  color: #fff;
}
.stats .yellow { color: #fedf87; }
.stats .blue { color: #5895c3; }
</style>
